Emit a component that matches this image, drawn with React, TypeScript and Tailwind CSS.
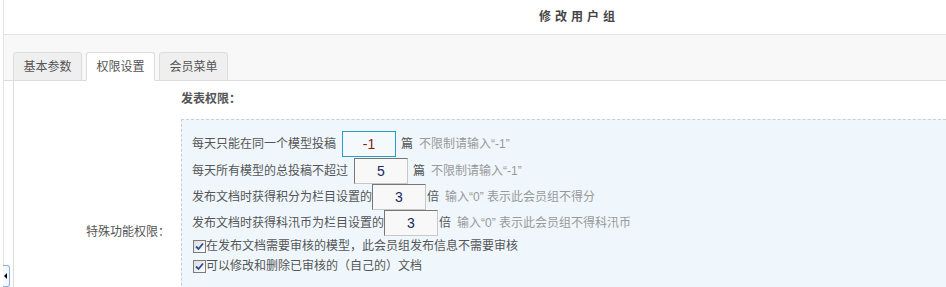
const font = { fontFamily: '"Liberation Sans", "Noto Sans CJK SC", sans-serif' };

type Row = {
  label: string;
  value: string;
  unit: string;
  hint: string;
  focused?: boolean;
};

const rows: Row[] = [
  { label: '每天只能在同一个模型投稿', value: '-1', unit: '篇', hint: '不限制请输入“-1”', focused: true },
  { label: '每天所有模型的总投稿不超过', value: '5', unit: '篇', hint: '不限制请输入“-1”' },
  { label: '发布文档时获得积分为栏目设置的', value: '3', unit: '倍', hint: '输入“0” 表示此会员组不得分' },
  { label: '发布文档时获得科汛币为栏目设置的', value: '3', unit: '倍', hint: '输入“0” 表示此会员组不得科汛币' },
];

const checks = [
  '在发布文档需要审核的模型，此会员组发布信息不需要审核',
  '可以修改和删除已审核的（自己的）文档',
];

function CheckBox() {
  return (
    <span className="inline-flex h-[13px] w-[13px] shrink-0 items-center justify-center border border-[#7b7b7b] bg-gradient-to-br from-[#dcdcdc] to-white">
      <svg width="9" height="9" viewBox="0 0 9 9">
        <path d="M1 4.5 L3.5 7 L8 1.5" fill="none" stroke="#2a4c9c" strokeWidth="1.8" />
      </svg>
    </span>
  );
}

export default function App() {
  return (
    <div className="relative h-[287px] w-[946px] overflow-hidden bg-white text-[12px] text-[#555]" style={font}>
      <div className="ml-[3px] h-full border-l border-[#e4e4e4]">
        <div className="flex h-[34px] items-center pl-[535px] text-[12px] font-bold tracking-[4px] text-[#444]">
          修改用户组
        </div>
        <div className="flex h-[47px] items-end border-y border-t-[#e2e2e2] border-b-[#dcdcdc] bg-[#f8f8f8] pl-[9px]">
          <div className="-mb-px flex gap-1">
            <div className="flex h-[29px] w-[69px] items-center justify-center rounded-t-[3px] border border-[#dcdcdc] bg-[#efefef] text-[#555]">
              基本参数
            </div>
            <div className="flex h-[29px] w-[69px] items-center justify-center rounded-t-[3px] border border-[#dcdcdc] border-b-white bg-white text-[#555]">
              权限设置
            </div>
            <div className="flex h-[29px] w-[69px] items-center justify-center rounded-t-[3px] border border-[#dcdcdc] bg-[#efefef] text-[#555]">
              会员菜单
            </div>
          </div>
        </div>
        <div className="ml-[9px] h-full border-l border-[#dcdcdc]">
          <div className="grid grid-cols-[167px_1fr]">
            <div />
            <div className="pt-[9px] leading-[18px] font-bold text-[#555]">发表权限：</div>
            <div className="flex items-center justify-end pr-[11px]">特殊功能权限：</div>
            <div className="mt-[11px] h-[236px] w-[800px] border border-dashed border-[#c6d0d6] bg-[#eff7fd] pl-[10px] pt-[10px]">
              {rows.map((r, i) => (
                <div key={r.label} className={`flex items-center ${i === 0 ? 'h-[28px]' : 'h-[26px]'}`}>
                  <span>{r.label}</span>
                  <span
                    className={`flex h-[26px] w-[54px] items-center justify-center text-[14px] ${
                      r.focused
                        ? 'ml-[6px] border border-[#2a9bc6] bg-[#f4f9fc] text-[#8a1a1a]'
                        : 'ml-[6px] border border-t-[#777] border-l-[#777] border-r-[#c8c8c8] border-b-[#c8c8c8] bg-[#f8f8f8] text-[#1c2a5a]'
                    } ${i >= 2 ? '!ml-0' : ''}`}
                  >
                    {r.value}
                  </span>
                  <span className={i >= 2 ? 'ml-px' : 'ml-[5px]'}>{r.unit}</span>
                  <span className="ml-[6px] text-[#999]">{r.hint}</span>
                </div>
              ))}
              {checks.map((c) => (
                <div key={c} className="flex h-[20px] items-center pl-px">
                  <CheckBox />
                  <span>{c}</span>
                </div>
              ))}
            </div>
          </div>
        </div>
      </div>
      <div className="absolute left-[3px] top-[265px] flex h-[22px] w-[7px] items-center rounded-r-[3px] border border-l-0 border-[#8aaee0] bg-[#f4f8fd]">
        <span className="ml-px h-0 w-0 border-y-[3px] border-r-[3px] border-y-transparent border-r-black" />
      </div>
    </div>
  );
}
